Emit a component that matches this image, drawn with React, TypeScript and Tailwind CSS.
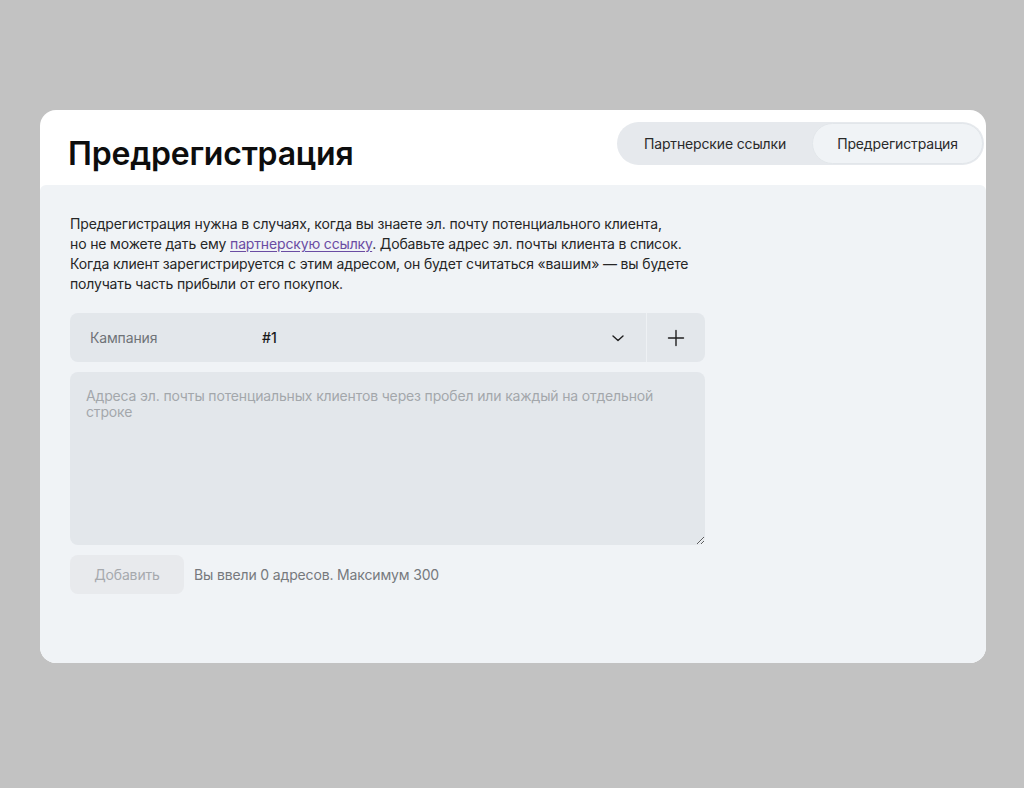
import * as React from "react"

function ChevronDown() {
    return (
        <svg width="16" height="16" viewBox="0 0 16 16" fill="none" className="text-[#1f1f1f]">
            <path d="M3 6l5 4.5L13 6" stroke="currentColor" strokeWidth="1.4" strokeLinecap="round" strokeLinejoin="round" />
        </svg>
    )
}

function Plus() {
    return (
        <svg width="18" height="18" viewBox="0 0 18 18" fill="none" className="text-[#1f1f1f]">
            <path d="M9 1.5v15M1.5 9h15" stroke="currentColor" strokeWidth="1.4" strokeLinecap="round" />
        </svg>
    )
}

export default function App() {
    const [tab, setTab] = React.useState<"links" | "prereg">("prereg")
    const [emails, setEmails] = React.useState("")
    const count = emails.split(/\s+/).filter(Boolean).length

    return (
        <div
            className="min-h-[788px] w-full bg-[#c2c2c2] pl-[40px] pr-[38px] pt-[110px] pb-[125px]"
            style={{ fontFamily: "Inter, 'Noto Sans', sans-serif" }}
        >
            <div className="flex h-[553px] flex-col overflow-hidden rounded-[16px] bg-white">
                {/* Header */}
                <div className="flex h-[75px] shrink-0 items-start justify-between pl-[28px] pr-[2px]">
                    <h1 className="mt-[24px] text-[32px] font-semibold leading-[40px] tracking-[-0.2px] text-[#0d0d0d]">
                        Предрегистрация
                    </h1>
                    <div className="mt-[12px] flex h-[43px] items-center rounded-full bg-[#e6e9ed] p-[1px]">
                        <button
                            onClick={() => setTab("links")}
                            className={`h-full w-[194px] rounded-full text-[14px] tracking-[-0.15px] text-[#2a2a2a] ${tab === "links" ? "border border-[#e2e6ea] bg-[#f0f3f6]" : ""}`}
                        >
                            Партнерские ссылки
                        </button>
                        <button
                            onClick={() => setTab("prereg")}
                            className={`h-full w-[171px] rounded-full text-[14px] tracking-[-0.15px] text-[#2a2a2a] ${tab === "prereg" ? "border border-[#e2e6ea] bg-[#f0f3f6]" : ""}`}
                        >
                            Предрегистрация
                        </button>
                    </div>
                </div>

                {/* Body */}
                <div className="flex-1 rounded-t-[6px] bg-[#f0f3f6] px-[30px] pt-[29px]">
                    <p className="text-[14px] leading-[20px] tracking-[-0.15px] text-[#262626]">
                        Предрегистрация нужна в случаях, когда вы знаете эл. почту потенциального клиента,
                        <br />
                        но не можете дать ему{" "}
                        <a href="#" className="text-[#6a4ca3] underline underline-offset-2">
                            партнерскую ссылку
                        </a>
                        . Добавьте адрес эл. почты клиента в список.
                        <br />
                        Когда клиент зарегистрируется с этим адресом, он будет считаться «вашим» — вы будете
                        <br />
                        получать часть прибыли от его покупок.
                    </p>

                    <div className="mt-[19px] w-[635px]">
                        {/* Campaign select */}
                        <div className="flex h-[49px] items-stretch overflow-hidden rounded-[8px] bg-[#e3e7eb]">
                            <div className="flex flex-1 items-center pl-[20px] pr-[20px]">
                                <span className="w-[172px] text-[14px] tracking-[-0.15px] text-[#6f7378]">Кампания</span>
                                <span className="flex-1 text-[14px] font-medium text-[#1a1a1a]">#1</span>
                                <ChevronDown />
                            </div>
                            <div className="w-px bg-[#eef1f4]" />
                            <button className="flex w-[58px] items-center justify-center">
                                <Plus />
                            </button>
                        </div>

                        {/* Emails */}
                        <textarea
                            value={emails}
                            onChange={(e) => setEmails(e.target.value)}
                            placeholder="Адреса эл. почты потенциальных клиентов через пробел или каждый на отдельной строке"
                            className="mt-[10px] block h-[173px] w-full rounded-[8px] bg-[#e3e7eb] px-[16px] py-[16px] text-[14px] leading-[16px] tracking-[-0.15px] text-[#1a1a1a] outline-none placeholder:text-[#a3a7ab]"
                        />

                        <div className="mt-[10px] flex items-center gap-[10px]">
                            <button
                                disabled
                                className="h-[39px] w-[114px] rounded-[8px] bg-[#e8eaed] text-[14px] tracking-[-0.15px] text-[#a6a9ad]"
                            >
                                Добавить
                            </button>
                            <span className="text-[14px] tracking-[-0.15px] text-[#76797d]">
                                Вы ввели {count} адресов. Максимум 300
                            </span>
                        </div>
                    </div>
                </div>
            </div>
        </div>
    )
}
